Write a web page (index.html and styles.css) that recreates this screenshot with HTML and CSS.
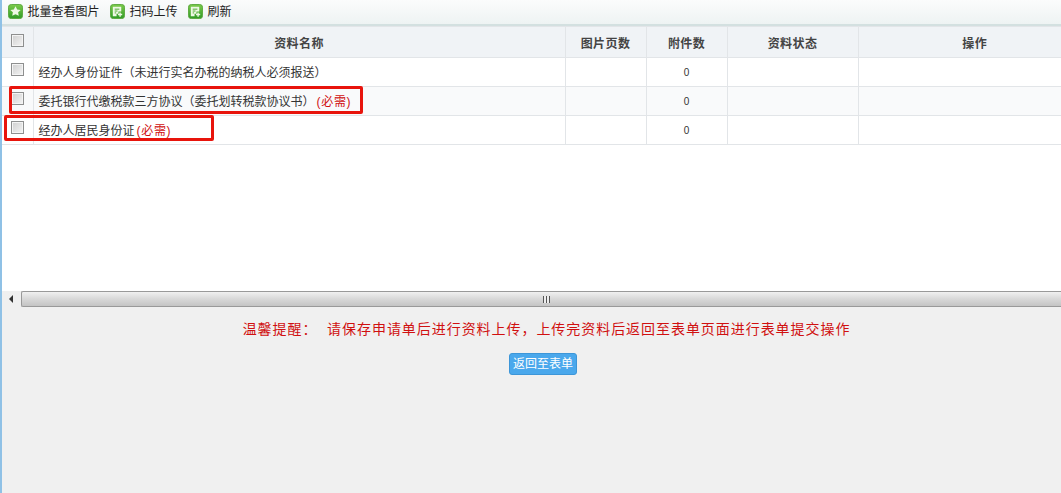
FILE: index.html
```html
<!DOCTYPE html>
<html>
<head>
<meta charset="utf-8">
<link rel="stylesheet" href="styles.css">
</head>
<body>

<svg class="defs" width="0" height="0">
  <defs>
    <linearGradient id="green" x1="0" y1="0" x2="0" y2="1">
      <stop offset="0" stop-color="#7ccb4a"/>
      <stop offset="1" stop-color="#2f9a26"/>
    </linearGradient>
  </defs>
</svg>

<div class="page">
  <div class="toolbar">
    <a class="tool">
      <svg class="icon" viewBox="0 0 16 16"><rect x="0.5" y="0.5" width="15" height="15" rx="3" fill="url(#green)" stroke="#5aa83c"/><path d="M8 2.500l1.800 3.400 3.700.5-2.700 2.500.7 3.700L8 11l-3.500 1.600.7-3.700-2.700-2.500 3.700-.5z" fill="#eef8e4"/></svg>
      批量查看图片
    </a>
    <a class="tool">
      <svg class="icon" viewBox="0 0 16 16"><rect x="0.5" y="0.5" width="15" height="15" rx="3" fill="url(#green)" stroke="#5aa83c"/><path d="M3 3h9v5h-3v2.500H7V13H3z" fill="#eef8e4"/><path d="M5 5.500h5M5 7.500h3M5 9.500h1.500" stroke="#4aa82c" fill="none"/><path d="M10 9h1.500v1.500H13V12h-1.500v1.500H10V12H8.500v-1.500H10z" fill="#eef8e4"/></svg>
      扫码上传
    </a>
    <a class="tool">
      <svg class="icon" viewBox="0 0 16 16"><rect x="0.5" y="0.5" width="15" height="15" rx="3" fill="url(#green)" stroke="#5aa83c"/><path d="M3 3h9v5h-3v2.500H7V13H3z" fill="#eef8e4"/><path d="M5 5.500h5M5 7.500h3M5 9.500h1.500" stroke="#4aa82c" fill="none"/><path d="M10 9h1.500v1.500H13V12h-1.500v1.500H10V12H8.500v-1.500H10z" fill="#eef8e4"/></svg>
      刷新
    </a>
  </div>

  <div class="grid-wrap">
    <table class="grid">
      <colgroup>
        <col class="c-check"><col class="c-name"><col class="c-pages"><col class="c-att"><col class="c-status"><col class="c-op">
      </colgroup>
      <thead>
        <tr>
          <th><input type="checkbox"></th>
          <th>资料名称</th>
          <th>图片页数</th>
          <th>附件数</th>
          <th>资料状态</th>
          <th>操作</th>
        </tr>
      </thead>
      <tbody>
        <tr>
          <td class="mid"><input type="checkbox"></td>
          <td>经办人身份证件（未进行实名办税的纳税人必须报送）</td>
          <td></td>
          <td class="mid">0</td>
          <td></td>
          <td></td>
        </tr>
        <tr class="alt">
          <td class="mid"><input type="checkbox"></td>
          <td>委托银行代缴税款三方协议（委托划转税款协议书）<span class="need">(必需)</span></td>
          <td></td>
          <td class="mid">0</td>
          <td></td>
          <td></td>
        </tr>
        <tr>
          <td class="mid"><input type="checkbox"></td>
          <td>经办人居民身份证<span class="need">(必需)</span></td>
          <td></td>
          <td class="mid">0</td>
          <td></td>
          <td></td>
        </tr>
      </tbody>
    </table>
    <div class="mark mark-one"></div>
    <div class="mark mark-two"></div>
  </div>

  <div class="scrollbar">
    <div class="arrow"></div>
    <div class="thumb"><span class="grip"></span></div>
  </div>

  <div class="footer">
    <p class="notice">温馨提醒：&nbsp;&nbsp;请保存申请单后进行资料上传，上传完资料后返回至表单页面进行表单提交操作</p>
    <a class="back">返回至表单</a>
  </div>
</div>

</body>
</html>
```

FILE: styles.css
```css
* {
  box-sizing: border-box;
}

html, body {
  margin: 0;
  height: 100%;
  overflow: hidden;
}

body {
  font-family: "Liberation Sans", "Noto Sans CJK SC", sans-serif;
  font-size: 12px;
  color: #333;
  background: #f0f0f0;
}

.defs {
  display: block;
}

.page {
  height: 493px;
  border-left: 2px solid #8fc1e6;
  display: flex;
  flex-direction: column;
}

.toolbar {
  height: 26px;
  padding: 4px 0 0 6px;
  display: flex;
  gap: 10.5px;
  background: linear-gradient(#fbfcfc, #eef3f3);
  border-bottom: 2px solid #d3e0e0;
}

.tool {
  display: flex;
  align-items: flex-start;
  gap: 4.5px;
  line-height: 17px;
  color: #222;
}

.icon {
  width: 15px;
  height: 15px;
}

.grid-wrap {
  position: relative;
  height: 265px;
  background: #fff;
  overflow: hidden;
}

.grid {
  width: 1090px;
  table-layout: fixed;
  border-collapse: collapse;
}

.c-check { width: 31px; }
.c-name { width: 532px; }
.c-pages { width: 81px; }
.c-att { width: 81px; }
.c-status { width: 131px; }

.grid th, .grid td {
  border: 1px solid #e2e5e8;
  padding: 0;
}

.grid tr > :first-child {
  border-left: 0;
  text-align: center;
  padding-left: 1px;
}

.grid th {
  height: 31px;
  background: #f0f3f6;
  font-weight: bold;
  color: #444;
  text-align: center;
  letter-spacing: 0.4px;
}

.grid td {
  height: 29px;
  padding: 0 0 2px 5px;
  color: #333;
}

.grid td.mid {
  padding: 0;
  text-align: center;
  font-size: 10px;
}

.grid .alt td {
  background: #f9fafb;
}

.grid input {
  appearance: none;
  width: 13px;
  height: 13px;
  margin: 0 0 3px;
  vertical-align: middle;
  border: 1px solid #8e8f8f;
  background: linear-gradient(135deg, #cfcfcf, #f4f4f4);
  box-shadow: inset 0 0 0 1px #f4f4f4;
}

.grid td input {
  margin-bottom: 5px;
}

.need {
  margin-left: 2px;
  color: #d01010;
  letter-spacing: 0.7px;
}

.mark {
  position: absolute;
  border: 3px solid #e8140c;
  border-radius: 2px;
}

.mark-one {
  left: 7px;
  top: 60px;
  width: 354px;
  height: 28px;
}

.mark-two {
  left: 2px;
  top: 89px;
  width: 210px;
  height: 26px;
}

.scrollbar {
  height: 16px;
  display: flex;
  background: #f0f0f0;
}

.arrow {
  width: 19px;
  position: relative;
}

.arrow:after {
  content: "";
  position: absolute;
  left: 7px;
  top: 4px;
  border-style: solid;
  border-width: 4px 4px 4px 0;
  border-color: transparent #333 transparent transparent;
}

.thumb {
  flex: 1;
  display: flex;
  align-items: center;
  justify-content: center;
  padding-left: 10px;
  border: 1px solid #999;
  border-right: 0;
  border-radius: 2px 0 0 2px;
  background: linear-gradient(#f0f0f0, #d8d8d8 50%, #c4c4c4);
}

.grip {
  width: 7px;
  height: 7px;
  background: repeating-linear-gradient(90deg, #555 0 1px, #eee 1px 3px);
}

.footer {
  flex: 1;
  display: flex;
  flex-direction: column;
  align-items: center;
  padding-left: 24px;
  background: #f0f0f0;
}

.notice {
  margin: 12px 0 0 6px;
  font-size: 14px;
  line-height: 20px;
  color: #d01010;
  letter-spacing: 0.95px;
}

.back {
  margin: 14px 1px 0 0;
  width: 68px;
  height: 22px;
  line-height: 20px;
  text-align: center;
  color: #fff;
  background: #4aa8ec;
  border: 1px solid #3d96d8;
  border-radius: 3px;
}
```
